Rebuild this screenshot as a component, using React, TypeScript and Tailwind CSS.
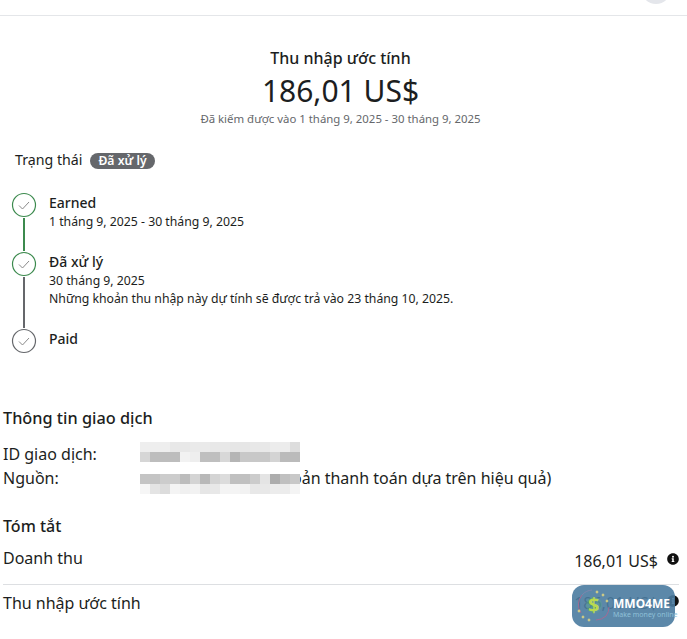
import React from 'react';

const blurTop = [
  ['#eeeeee', '#eeeeee', '#eeeeee', '#e8e8e8', '#e8e8e8', '#eaeaea', '#eaeaea', '#e8e8e8', '#e8e8e8', '#e6e6e6', '#e6e6e6', '#e8e8e8', '#e8e8e8', '#ececec', '#ececec', '#dddddd'],
  ['#d6d6d6', '#bdbdbd', '#bdbdbd', '#bdbdbd', '#f2f2f2', '#eeeeee', '#bfbfbf', '#bfbfbf', '#d8d8d8', '#b5b5b5', '#c8c8c8', '#c8c8c8', '#c8c8c8', '#d4d4d4', '#bbbbbb', '#bbbbbb'],
];
const blurBottom = [
  ['#c4c4c4', '#c4c4c4', '#cccccc', '#cccccc', '#bcbcbc', '#d4d4d4', '#b8b8b8', '#d4d4d4', '#dcdcdc', '#c0c0c0', '#c0c0c0', '#cccccc', '#e4e4e4', '#adadad', '#c0c0c0', '#c8c8c8'],
  ['#f6f6f6', '#e4e4e4', '#dcdcdc', '#f4f4f4', '#f0f0f0', '#f2f2f2', '#e6e6e6', '#e8e8e8', '#f4f4f4', '#f4f4f4', '#f2f2f2', '#e8e8e8', '#e8e8e8', '#ececec', '#ececec', '#f4f4f4'],
];

const Blur = ({ rows }: { rows: string[][] }) => (
  <div className="relative z-10 shrink-0">
    {rows.map((row, i) => (
      <div key={i} className="flex">
        {row.map((c, j) => (
          <div key={j} className="h-[10px] w-[10px]" style={{ backgroundColor: c }} />
        ))}
      </div>
    ))}
  </div>
);

const Step = ({ color }: { color: string }) => (
  <svg width="26" height="26" viewBox="0 0 26 26" fill="none" className="shrink-0">
    <circle cx="13" cy="13" r="11.5" stroke={color} strokeWidth="1.2" fill="white" />
    <path d="M8 13.5l3.5 3.5 6.5-7" stroke="#8a8a8a" strokeWidth="1" />
  </svg>
);

const Info = ({ className }: { className: string }) => (
  <svg width="12" height="12" viewBox="0 0 512 512" fill="#111" className={className}>
    <path d="M256 8C119 8 8 119 8 256s111 248 248 248 248-111 248-248S393 8 256 8zm0 110a42 42 0 1 1 0 84 42 42 0 0 1 0-84zm56 254c0 7-5 12-12 12h-88c-7 0-12-5-12-12v-24c0-7 5-12 12-12h12v-64h-12c-7 0-12-5-12-12v-24c0-7 5-12 12-12h64c7 0 12 5 12 12v100h12c7 0 12 5 12 12z" />
  </svg>
);

const stars = [
  [25, 7],
  [31, 10],
  [35, 16],
  [7, 26],
  [11, 32],
  [17, 35],
];

const App: React.FC = () => {
  return (
    <div className="relative h-[639px] w-[687px] overflow-hidden bg-white font-['Noto_Sans',sans-serif] text-[#1c1e21]">
      {/* Top bar */}
      <div className="relative h-4 overflow-hidden border-b border-[#e4e6e9]">
        <div className="absolute -top-[26px] left-[641px] h-[30px] w-[30px] rounded-full bg-[#e4e6eb]" />
      </div>

      {/* Summary */}
      <div className="mt-[31px] flex flex-col items-center pr-[6px]">
        <div className="text-[16px] leading-[22px] font-medium">Thu nhập ước tính</div>
        <div className="mt-[3px] text-[30px] leading-[38px]">186,01 US$</div>
        <div className="mt-[1px] text-[11.4px] leading-[16px] text-[#65676b]">Đã kiếm được vào 1 tháng 9, 2025 - 30 tháng 9, 2025</div>
      </div>

      {/* Status */}
      <div className="mt-[23px] ml-[15px] flex items-center gap-2">
        <span className="text-[14.2px] leading-[20px]">Trạng thái</span>
        <span className="mt-[1px] rounded-full bg-[#65676b] px-2 text-[12.2px] leading-[16px] font-semibold text-white">Đã xử lý</span>
      </div>

      {/* Timeline */}
      <div className="mt-[22px] ml-[11px] flex">
        <div className="flex w-[26px] flex-col items-center">
          <Step color="#3c8a4e" />
          <div className="h-[33px] w-[2px] bg-[#3c8a4e]" />
          <Step color="#3c8a4e" />
          <div className="h-[51px] w-[2px] bg-[#65676b]" />
          <Step color="#65676b" />
        </div>
        <div className="mt-[1px] ml-3 text-[12.25px] leading-[18px]">
          <div className="h-[59px]">
            <div className="text-[14px] leading-[20px] font-medium">Earned</div>
            <div>1 tháng 9, 2025 - 30 tháng 9, 2025</div>
          </div>
          <div className="h-[77px]">
            <div className="text-[14px] leading-[20px] font-medium">Đã xử lý</div>
            <div>30 tháng 9, 2025</div>
            <div>Những khoản thu nhập này dự tính sẽ được trả vào 23 tháng 10, 2025.</div>
          </div>
          <div className="text-[14px] leading-[20px] font-medium">Paid</div>
        </div>
      </div>

      {/* Transaction info */}
      <div className="mt-[53px] px-[3px]">
        <div className="text-[16.3px] leading-[22px] font-medium">Thông tin giao dịch</div>
        <div className="mt-[13px] flex text-[16px] leading-[20px]">
          <span className="mt-[2px] w-[137px]">ID giao dịch:</span>
          <Blur rows={blurTop} />
        </div>
        <div className="mt-[10px] flex text-[16px] leading-[20px]">
          <span className="-mt-[6px] w-[137px]">Nguồn:</span>
          <Blur rows={blurBottom} />
          <span className="-mt-[6px] -ml-[8px]">oản thanh toán dựa trên hiệu quả)</span>
        </div>
      </div>

      {/* Summary table */}
      <div className="mt-[21px] px-[3px]">
        <div className="text-[16px] leading-[22px] font-medium">Tóm tắt</div>
        <div className="mt-[10px] flex h-[38px] w-[676px] justify-between border-b border-[#dddfe2] text-[16px] leading-[22px]">
          <span>Doanh thu</span>
          <span className="mt-[3px] flex items-start">
            186,01 US$
            <Info className="mt-[3px] ml-[9px]" />
          </span>
        </div>
        <div className="mt-[7px] flex w-[676px] justify-between text-[16px] leading-[22px]">
          <span>Thu nhập ước tính</span>
          <span className="flex items-start">
            186,01 US$
            <Info className="mt-[3px] ml-[9px]" />
          </span>
        </div>
      </div>

      {/* Watermark */}
      <div className="absolute top-[585px] left-[572px] flex h-[42px] w-[103px] items-center rounded-[12px] bg-[#4a7ba0]/90">
        <svg width="40" height="42" viewBox="0 0 40 42" className="shrink-0">
          <path d="M10 10A15 15 0 0 0 9 28" fill="none" stroke="#a56a93" strokeWidth="1" />
          <path d="M34 31A15 15 0 0 0 37 22" fill="none" stroke="#a56a93" strokeWidth="1" />
          <path d="M10 10A15 15 0 0 1 20 5" fill="none" stroke="#7d86ad" strokeWidth="1" />
          <path d="M24 35A15 15 0 0 0 34 31" fill="none" stroke="#a56a93" strokeWidth="1" />
          <circle cx="22" cy="20" r="8" fill="#5fae86" fillOpacity="0.35" />
          {stars.map(([x, y]) => (
            <path key={`${x}-${y}`} d={`M${x} ${y - 2}l.6 1.4 1.4.6-1.4.6-.6 1.4-.6-1.4-1.4-.6 1.4-.6z`} fill="#f6e27a" />
          ))}
        </svg>
        <span className="absolute top-[8px] left-[16px] text-[20px] leading-[24px] font-bold text-[#b9d94f]">$</span>
        <div className="mt-[4px] ml-[1px] flex flex-col">
          <span className="text-[12px] leading-[13px] font-bold whitespace-nowrap text-white">MMO4ME</span>
          <span className="text-[7px] leading-[10px] whitespace-nowrap text-[#8fc0d8]">Make money online</span>
        </div>
      </div>
    </div>
  );
};

export default App;
